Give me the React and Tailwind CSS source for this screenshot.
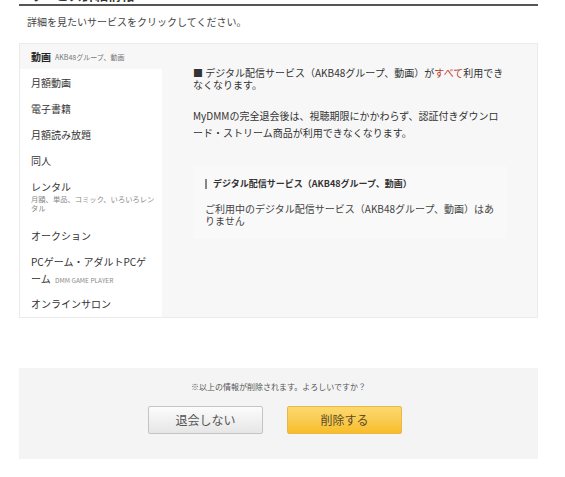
import React from "react";

const navItems = [
  { label: "月額動画" },
  { label: "電子書籍" },
  { label: "月額読み放題" },
  { label: "同人" },
];

export default function App() {
  return (
    <div className="w-[565px] h-[477px] bg-white font-['Noto_Sans_CJK_JP','Noto_Sans',sans-serif] text-[#333] overflow-hidden">
      <div className="ml-[19px] w-[519px]">
        <div className="h-[6px] overflow-hidden border-b-2 border-[#555] pl-[11px]">
          <p className="mt-[-12px] text-[13px] font-bold leading-[14px] text-[#333]">サービス詳細情報</p>
        </div>
        <p className="mt-[10px] pl-[8px] text-[10px] leading-[12px] text-[#444]">
          詳細を見たいサービスをクリックしてください。
        </p>

        <div className="mt-[15px] flex border border-[#ebebeb] bg-[#f7f7f7]">
          <div className="w-[142px] shrink-0">
            <div className="flex h-[25px] items-center pl-[11px]">
              <span className="text-[10px] font-bold leading-[12px] text-[#222]">動画</span>
              <span className="ml-[4px] text-[7px] leading-[10px] text-[#777]">AKB48グループ、動画</span>
            </div>
            <ul className="bg-white text-[10px] text-[#333]">
              {navItems.map((it) => (
                <li key={it.label} className="px-[11px] py-[4.5px] leading-[17px]">
                  {it.label}
                </li>
              ))}
              <li className="px-[11px] pt-[4.5px] pb-[10px] leading-[17px]">
                レンタル
                <div className="text-[7.3px] leading-[9px] text-[#888] whitespace-nowrap">
                  <div>月額、単品、コミック、いろいろレン</div>
                  <div>タル</div>
                </div>
              </li>
              <li className="px-[11px] py-[4.5px] leading-[17px]">オークション</li>
              <li className="px-[11px] py-[4.5px] leading-[17px]">
                PCゲーム・アダルトPCゲ
                <br />
                ーム <span className="ml-[2px] text-[6.5px] text-[#888]">DMM GAME PLAYER</span>
              </li>
              <li className="px-[11px] pt-[1px] pb-[5px] leading-[17px]">オンラインサロン</li>
            </ul>
          </div>

          <div className="flex-1 pl-[31px] pr-[30px] pt-[23px]">
            <p className="text-[10px] leading-[11.5px] text-[#333] whitespace-nowrap">
              ■ デジタル配信サービス（AKB48グループ、動画）が<span className="text-[#c0392b]">すべて</span>利用でき
              <br />
              なくなります。
            </p>
            <p className="mt-[17px] text-[10px] leading-[17px] text-[#333] whitespace-nowrap">
              MyDMMの完全退会後は、視聴期限にかかわらず、認証付きダウンロ
              <br />
              ード・ストリーム商品が利用できなくなります。
            </p>
            <div className="mt-[25px] w-[314px] bg-[#f9f9f9] pl-[12px] pr-[10px] pt-[12px] pb-[13px]">
              <div className="flex items-center">
                <span className="h-[10px] w-[2px] bg-[#888]"></span>
                <span className="ml-[6px] text-[9px] font-bold leading-[11px] text-[#333]">
                  デジタル配信サービス（AKB48グループ、動画）
                </span>
              </div>
              <p className="mt-[14px] text-[10px] leading-[11.5px] text-[#444] whitespace-nowrap">
                ご利用中のデジタル配信サービス（AKB48グループ、動画）はあ
                <br />
                りません
              </p>
            </div>
          </div>
        </div>

        <div className="mt-[50px] bg-[#f4f4f4] pt-[14px] pb-[25px]">
          <p className="text-center text-[8px] leading-[10px] text-[#555]">
            ※以上の情報が削除されます。よろしいですか？
          </p>
          <div className="mt-[14px] flex justify-center gap-[24px] pr-[7px]">
            <button className="h-[28px] w-[115px] rounded-[2px] border border-[#c4c4c4] bg-gradient-to-b from-[#fcfcfc] to-[#e6e6e6] text-[12px] text-[#555]">
              退会しない
            </button>
            <button className="h-[28px] w-[115px] rounded-[2px] border border-[#e8b84a] bg-gradient-to-b from-[#fcd96e] to-[#f8bd25] text-[12px] text-[#5a4a2a]">
              削除する
            </button>
          </div>
        </div>
      </div>
    </div>
  );
}
